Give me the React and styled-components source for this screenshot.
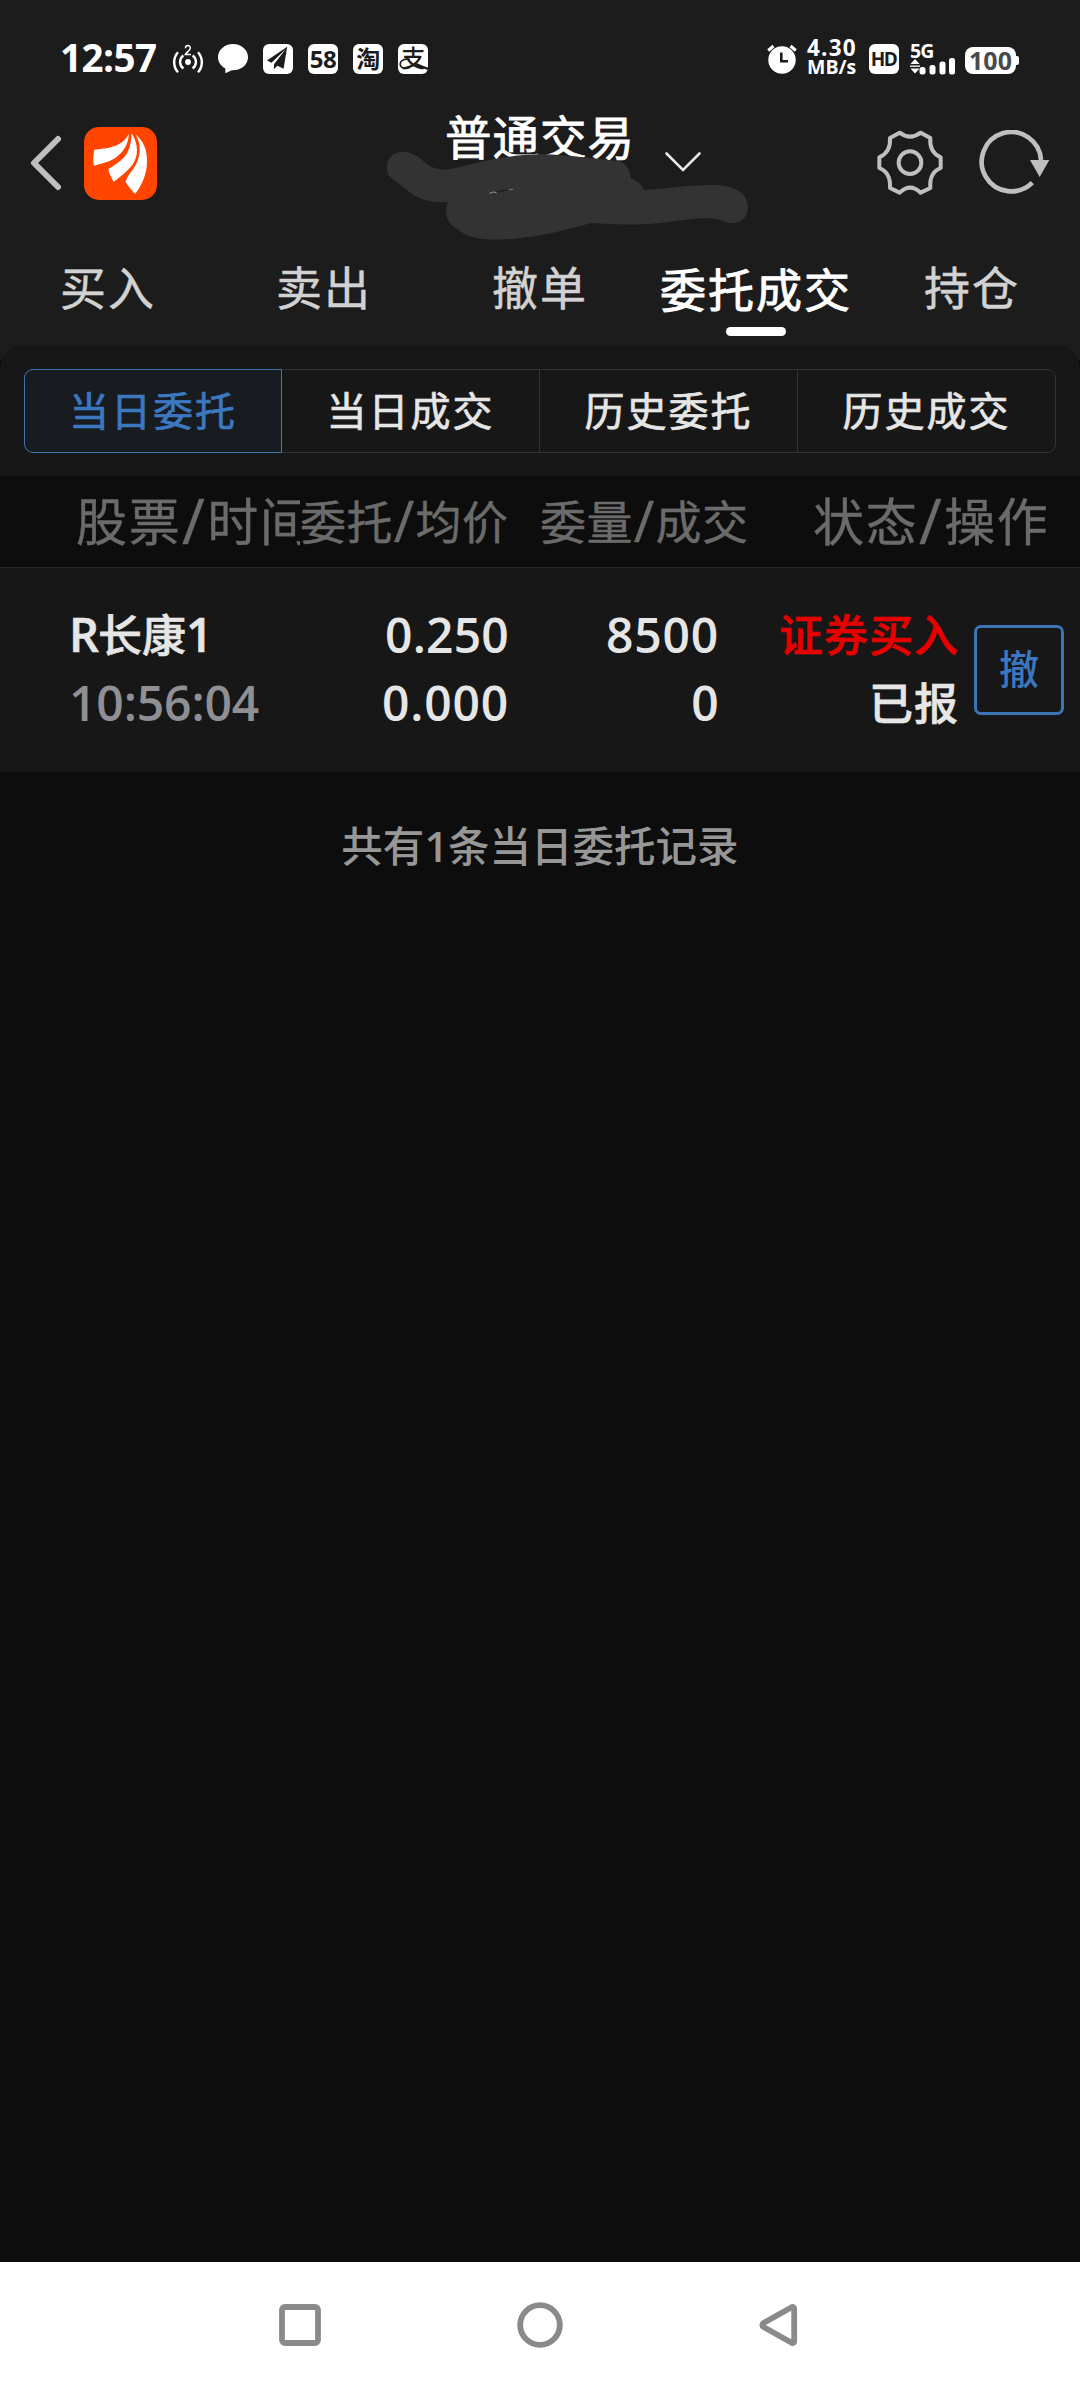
import styled, { createGlobalStyle } from "styled-components";

const tabs = ["买入", "卖出", "撤单", "委托成交", "持仓"];
const filters = ["当日委托", "当日成交", "历史委托", "历史成交"];

const orders = [
  {
    market: "R",
    name: "长康",
    suffix: "1",
    time: "10:56:04",
    price: "0.250",
    average: "0.000",
    amount: "8500",
    filled: "0",
    side: "证券买入",
    status: "已报",
  },
];

const App = () => {
  return (
    <Screen>
      <GlobalStyle />
      <TopArea>
        <StatusBar />
        <TitleBar />
        <Tabs>
          {tabs.map((tab) => (
            <Tab key={tab} $active={tab === "委托成交"}>
              <span>{tab}</span>
            </Tab>
          ))}
        </Tabs>
      </TopArea>
      <FilterPanel>
        <Filters>
          {filters.map((filter, i) => (
            <Filter key={filter} $active={i === 0}>
              {filter}
            </Filter>
          ))}
        </Filters>
      </FilterPanel>
      <TableHead>
        <HeadCell $large $clip>
          股票<Slash>/</Slash>时间
        </HeadCell>
        <HeadCell>
          委托<Slash>/</Slash>均价
        </HeadCell>
        <HeadCell>
          委量<Slash>/</Slash>成交
        </HeadCell>
        <HeadCell $large>
          状态<Slash>/</Slash>操作
        </HeadCell>
      </TableHead>
      {orders.map((order) => (
        <OrderRow key={order.time}>
          <Stack $left>
            <StockName>
              <b>{order.market}</b>
              {order.name}
              <b>{order.suffix}</b>
            </StockName>
            <Figure $muted>{order.time}</Figure>
          </Stack>
          <Stack>
            <Figure>{order.price}</Figure>
            <Figure $wide>{order.average}</Figure>
          </Stack>
          <Stack>
            <Figure $wide>{order.amount}</Figure>
            <Figure>{order.filled}</Figure>
          </Stack>
          <Stack>
            <Label $buy>{order.side}</Label>
            <Label>{order.status}</Label>
          </Stack>
          <CancelButton>撤</CancelButton>
        </OrderRow>
      ))}
      <Summary>
        共有<b>{orders.length}</b>条当日委托记录
      </Summary>
      <SystemNav>
        <NavKey>
          <svg width="46" height="46" viewBox="0 0 46 46">
            <rect x="5" y="5" width="36" height="36" rx="3" />
          </svg>
        </NavKey>
        <NavKey>
          <svg width="46" height="46" viewBox="0 0 46 46">
            <circle cx="23" cy="23" r="19.8" />
          </svg>
        </NavKey>
        <NavKey>
          <svg width="46" height="46" viewBox="0 0 46 46">
            <path d="M6.500 21 35 5a1.600 1.600 0 0 1 2.200 1.400V39.600a1.600 1.600 0 0 1-2.200 1.400L6.500 25a2.300 2.300 0 0 1 0-4Z" />
          </svg>
        </NavKey>
      </SystemNav>
    </Screen>
  );
};

const StatusBar = () => (
  <StatusWrap>
    <Clock>12:57</Clock>
    <StatusIcons>
      <svg width="30" height="30" viewBox="0 0 30 30" fill="none" stroke="#fff" strokeWidth="2.4">
        <circle cx="15" cy="18" r="2.9" fill="#fff" stroke="none" />
        <path d="M10.400 11.500a8 8 0 0 0 0 13M19.600 11.500a8 8 0 0 1 0 13M5 8.300a15 15 0 0 0 0 20M25 8.300a15 15 0 0 1 0 20" />
        <path d="M12.400 4.200c.2-3.500 5-3.500 4.900 0-.1 2-3.400 3.800-4.900 6.200H18" strokeWidth="1.500" />
      </svg>
      <svg width="30" height="30" viewBox="0 0 30 30" fill="#fff">
        <path d="M15 0C6.600 0 0 6 0 13.200c0 4.800 2.800 8.800 7.200 11.100L7.500 29.300l6.300-3.100C23 26.700 30 20.800 30 13.200 30 6 23.400 0 15 0Z" />
      </svg>
      <svg width="30" height="30" viewBox="0 0 30 30">
        <rect width="30" height="30" rx="6" fill="#fff" />
        <path d="M24.200 2.800 4 16.500l4.500 2.200L22.800 5 11 20.200v5l3.300-3.400 6.300 3Z" fill="#1c1c1c" />
      </svg>
      <AppBadge $size="24px">58</AppBadge>
      <AppBadge $size="24px">淘</AppBadge>
      <PayBadge $size="24px">
        支
        <svg width="30" height="30" viewBox="0 0 30 30" fill="none" stroke="#1c1c1c" strokeWidth="1.600">
          <path d="M12 15.500C6 14 2 17 2.200 20.500c.3 3.300 4.500 5 9.300 3.200" />
          <path d="M18 20c4 1.800 8 3.500 12 4.800" strokeWidth="2.400" />
        </svg>
      </PayBadge>
    </StatusIcons>
    <StatusRight>
      <svg width="30" height="30" viewBox="0 0 30 30">
        <circle cx="15" cy="16" r="13.700" fill="#fff" />
        <path d="M1.200 6.500 6.500 2M28.800 6.500 23.500 2" stroke="#fff" strokeWidth="3" />
        <path d="M14.300 8.500v8.800h6.800" stroke="#1c1c1c" strokeWidth="2.600" fill="none" />
      </svg>
      <Speed>
        <SpeedValue>4.30</SpeedValue>
        <span>MB/s</span>
      </Speed>
      <HdBadge>HD</HdBadge>
      <Signal>
        <span>5G</span>
        <svg width="46" height="17" viewBox="0 0 46 17" fill="#fff">
          <path d="M5 1 9.500 6H.5ZM5 15.500l4.500-5H.5Z" />
          <path d="M0 7.500h10v1.300H0Z" />
          <rect x="9.500" y="9" width="6" height="7.500" rx="2.500" />
          <rect x="19.500" y="7" width="6" height="9.500" rx="2.500" />
          <rect x="29.500" y="3.500" width="6" height="13" rx="2.500" />
          <rect x="39" y="0" width="6" height="16.500" rx="2.500" />
        </svg>
      </Signal>
      <Battery>100</Battery>
    </StatusRight>
  </StatusWrap>
);

const TitleBar = () => (
  <TitleWrap>
    <TitleLeft>
      <svg width="32" height="56" viewBox="0 0 32 56" fill="none" stroke="#bfbfbf" strokeWidth="6" strokeLinecap="round">
        <path d="M29 4 5 28 29 52" strokeLinejoin="round" />
      </svg>
      <Logo>
        <svg width="73" height="73" viewBox="0 0 219 219" fill="#fff">
          <path d="M134 21c1 34-25 72-66 84-15 5-27 8-38 11-3-12-3-32 1-48 39-4 83-7 103-47Z" />
          <path d="M143 19c20 30 22 69 2 95-14 18-37 36-56 51-6-12-15-28-16-39 25-15 47-29 58-51 9-17 11-37 12-56Z" />
          <path d="M155 23c22 17 35 44 34 81 0 39-17 73-36 97-9-11-21-22-28-36 2-17 22-35 32-55 14-29 14-61-2-87Z" />
        </svg>
      </Logo>
    </TitleLeft>
    <TitleCenter>
      <Title>普通交易</Title>
      <svg width="38" height="22" viewBox="0 0 38 22" fill="none" stroke="#e8e8e8" strokeWidth="2.600" strokeLinecap="round">
        <path d="M2.500 2.500 19 19 35.500 2.500" />
      </svg>
      <Scribble viewBox="0 0 1260 450">
        <path
          d="M80 205c2-36 24-50 52-50 60 6 58 55 128 54 68-10 150-44 282-46 90 1 160 14 230 20 26 5 38 24 40 52 18 6 32 16 40 35 90-7 140-17 220-15 54 3 92 26 92 68-2 34-26 47-52 46-26-2-28-14-74-14-62 1-130 17-196 18-60 2-110-2-148-4-90 23-130 37-230 47-60 4-104 7-148-13-28-17-58-33-58-70 0-12 3-20 7-26-90 2-110-27-148-56-23-16-36-22-37-46Z"
          fill="#333"
        />
        <path d="M388 280l12-4 10 2" stroke="#aaa" strokeWidth="2.500" fill="none" />
        <path d="M410 276l38-8" stroke="#151515" strokeWidth="2.500" />
        <path d="M446 269l14-1" stroke="#999" strokeWidth="2" />
      </Scribble>
    </TitleCenter>
    <TitleRight>
      <svg width="66" height="66" viewBox="0 0 198 198" fill="none" stroke="#bfbfbf" strokeWidth="12">
        <path d="M68 8Q99 32 131 8L160 24Q156 66 191 82V114Q156 128 160 174L131 188Q99 158 68 188L39 174Q42 128 7 114V82Q42 66 39 24Z" strokeLinejoin="round" />
        <circle cx="99" cy="98" r="34" />
      </svg>
      <svg width="72" height="66" viewBox="0 0 216 198">
        <path d="M189 90A89 89 0 1 0 163 158" fill="none" stroke="#bfbfbf" strokeWidth="14" />
        <path d="M156 90h58l-29 51Z" fill="#bfbfbf" />
      </svg>
    </TitleRight>
  </TitleWrap>
);

const GlobalStyle = createGlobalStyle`
  * {
    box-sizing: border-box;
  }

  body {
    margin: 0px;
    background: #0d0d0d;
    font-family: "Open Sans", "Noto Sans CJK SC", sans-serif;
  }

  svg {
    display: block;
    flex-shrink: 0;
  }
`;

const Screen = styled.div`
  display: flex;
  flex-direction: column;
  width: 1080px;
  height: 2388px;
  overflow: hidden;
  background: #0d0d0d;
`;

const TopArea = styled.div`
  height: 360px;
  flex-shrink: 0;
  background: #1c1c1c;
`;

const StatusWrap = styled.div`
  display: flex;
  align-items: center;
  height: 100px;
  padding: 18px 61px 0px 60px;
  color: #fff;
`;

const Clock = styled.div`
  width: 113px;
  font-size: 38.500px;
  font-weight: 700;
  line-height: 40px;
  letter-spacing: -0.5px;
  margin-top: -5px;
`;

const StatusIcons = styled.div`
  display: flex;
  gap: 15px;
`;

const AppBadge = styled.div`
  display: flex;
  align-items: center;
  justify-content: center;
  width: 30px;
  height: 30px;
  border-radius: 6px;
  background: #fff;
  color: #1c1c1c;
  font-size: ${({ $size }) => $size};
  font-weight: 700;
  line-height: 30px;
  letter-spacing: -0.5px;
`;

const PayBadge = styled(AppBadge)`
  position: relative;
  font-weight: 500;
  padding-bottom: 2px;

  svg {
    position: absolute;
    left: 0px;
    top: 0px;
  }
`;

const StatusRight = styled.div`
  display: flex;
  align-items: center;
  margin-left: auto;
`;

const Speed = styled.div`
  display: flex;
  flex-direction: column;
  width: 52px;
  margin: -4px 10px 0px 10px;
  font-size: 19.500px;
  font-weight: 700;
  line-height: 19px;
`;

const SpeedValue = styled.span`
  font-size: 22.500px;
  letter-spacing: 1.200px;
`;

const HdBadge = styled(AppBadge).attrs({ $size: "19px" })`
  letter-spacing: -1.500px;
  padding-right: 1px;
`;

const Signal = styled.div`
  display: flex;
  flex-direction: column;
  width: 46px;
  height: 30px;
  margin: 0px 9px 0px 11px;
  font-size: 19.500px;
  font-weight: 700;
  line-height: 14px;
  letter-spacing: -1px;
`;

const Battery = styled.div`
  position: relative;
  width: 51px;
  height: 27px;
  margin-top: 3px;
  margin-right: 3px;
  border-radius: 8px;
  background: #fff;
  color: #4a4a4a;
  font-size: 25px;
  font-weight: 700;
  line-height: 27px;
  text-align: center;

  &::after {
    content: "";
    position: absolute;
    right: -3px;
    top: 9px;
    width: 4px;
    height: 9px;
    border-radius: 0px 2px 2px 0px;
    background: #fff;
  }
`;

const TitleWrap = styled.div`
  display: grid;
  grid-template-columns: 360px 420px 300px;
  height: 150px;
`;

const TitleLeft = styled.div`
  display: flex;
  align-items: center;
  gap: 23px;
  height: 126px;
  padding-left: 29px;
`;

const Logo = styled.div`
  width: 73px;
  height: 73px;
  border-radius: 15px;
  background: #ff4500;
`;

const TitleCenter = styled.div`
  position: relative;
  display: flex;
  align-items: flex-start;
  padding-left: 85px;

  > svg:first-of-type {
    margin: 51px 0px 0px 27px;
  }
`;

const Title = styled.div`
  width: 192px;
  padding-top: 7px;
  color: #fff;
  font-size: 46.500px;
  font-weight: 400;
  line-height: 60px;
  letter-spacing: 1px;
  white-space: nowrap;
  -webkit-text-stroke: 0.8px #fff;
`;

const Scribble = styled.svg`
  position: absolute;
  left: 0px;
  top: 0px;
  width: 420px;
  height: 150px;
`;

const TitleRight = styled.div`
  display: flex;
  align-items: center;
  gap: 35px;
  height: 126px;
  padding-left: 97px;
`;

const Tabs = styled.div`
  display: grid;
  grid-template-columns: repeat(5, 1fr);
  height: 95px;
`;

const Tab = styled.div`
  display: flex;
  flex-direction: column;
  align-items: center;
  padding-top: ${({ $active }) => ($active ? "9px" : "7px")};
  color: ${({ $active }) => ($active ? "#fff" : "#d2d2d2")};
  font-size: 46px;
  line-height: 60px;
  letter-spacing: 2px;
  white-space: nowrap;
  -webkit-text-stroke: ${({ $active }) => ($active ? "0.9px" : "0.5px")};

  &::after {
    content: "";
    display: ${({ $active }) => ($active ? "block" : "none")};
    width: 60px;
    height: 9px;
    margin-top: 8px;
    border-radius: 5px;
    background: #fff;
  }
`;

const FilterPanel = styled.div`
  position: relative;
  flex-shrink: 0;
  height: 131px;
  margin-top: -15px;
  padding: 24px 24px 0px 24px;
  border-radius: 24px 24px 0px 0px;
  background: #171717;
`;

const Filters = styled.div`
  display: grid;
  grid-template-columns: repeat(4, 1fr);
  height: 84px;
`;

const Filter = styled.div`
  display: flex;
  align-items: center;
  justify-content: center;
  border: 1px solid ${({ $active }) => ($active ? "#3f75b0" : "#333")};
  border-left-width: ${({ $active }) => ($active ? "1px" : "0px")};
  background: ${({ $active }) => ($active ? "#181b20" : "transparent")};
  color: ${({ $active }) => ($active ? "#3b78c0" : "#e6e6e6")};
  font-size: 40px;
  line-height: 60px;
  letter-spacing: 2px;
  -webkit-text-stroke: 0.7px;

  &:first-child {
    border-radius: 9px 0px 0px 9px;
  }

  &:last-child {
    border-radius: 0px 9px 9px 0px;
  }
`;

const TableHead = styled.div`
  display: grid;
  grid-template-columns: 224px 240px 273px 267px;
  align-items: center;
  flex-shrink: 0;
  height: 92px;
  padding: 0px 0px 2px 76px;
  border-bottom: 1px solid #272727;
  color: #6b6b6b;
`;

const Slash = styled.span`
  padding: 0px 0.01em;
  font-size: 1.22em;
  line-height: 0;
  vertical-align: -0.06em;
`;

const HeadCell = styled.div`
  overflow: ${({ $clip }) => ($clip ? "hidden" : "visible")};
  font-size: ${({ $large }) => ($large ? "51px" : "46px")};
  line-height: 72px;
  letter-spacing: ${({ $large }) => ($large ? "1.7px" : "0.6px")};
  white-space: nowrap;
  -webkit-text-stroke: 0.4px;
`;

const OrderRow = styled.div`
  display: grid;
  grid-template-columns: 200px 240px 210px 240px 90px;
  flex-shrink: 0;
  height: 204px;
  padding-left: 69px;
  background: #171717;
`;

const Stack = styled.div`
  display: flex;
  flex-direction: column;
  align-items: ${({ $left }) => ($left ? "flex-start" : "flex-end")};
  padding-top: 33px;
`;

const Label = styled.div`
  color: ${({ $buy }) => ($buy ? "#e60000" : "#e6e6e6")};
  font-size: 44px;
  font-weight: 500;
  line-height: 68px;
  letter-spacing: 1px;
  white-space: nowrap;
  -webkit-text-stroke: 0.6px;
`;

const StockName = styled(Label)`
  letter-spacing: 0px;

  b {
    font-size: 47px;
    font-weight: 600;
    line-height: 0;
    letter-spacing: -1px;
  }
`;

const Figure = styled.div`
  color: ${({ $muted }) => ($muted ? "#8f8f94" : "#e6e6e6")};
  font-size: 48px;
  font-weight: 600;
  line-height: 68px;
  letter-spacing: ${({ $muted, $wide }) => ($wide ? "0.8px" : $muted ? "-0.1px" : "0.2px")};
`;

const CancelButton = styled.button`
  width: 90px;
  height: 90px;
  margin: 57px 0px 0px 15px;
  padding: 0px 0px 6px 0px;
  border: 3px solid #3b75b5;
  border-radius: 7px;
  background: transparent;
  color: #3b78c0;
  font-family: inherit;
  font-size: 40px;
  font-weight: 500;
`;

const Summary = styled.div`
  flex: 1;
  padding-top: 44px;
  color: #979797;
  font-size: 41.500px;
  font-weight: 500;
  line-height: 60px;
  text-align: center;

  b {
    font-weight: 600;
  }
`;

const SystemNav = styled.div`
  display: flex;
  align-items: center;
  justify-content: center;
  gap: 194px;
  flex-shrink: 0;
  height: 126px;
  background: #fff;
`;

const NavKey = styled.div`
  svg {
    fill: none;
    stroke: #8a8a8a;
    stroke-width: 5.800px;
  }
`;

export default App;
